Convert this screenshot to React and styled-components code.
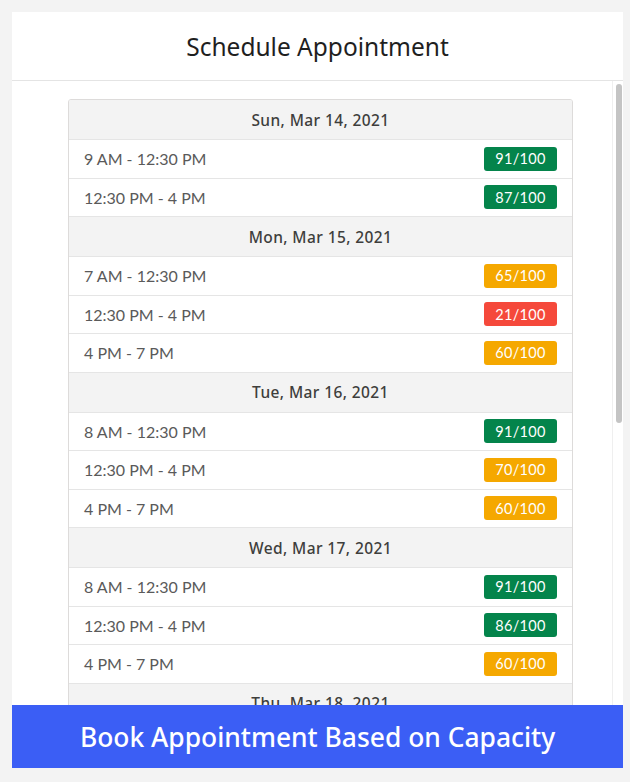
import React from "react";
import styled, { createGlobalStyle } from "styled-components";

const GlobalStyle = createGlobalStyle`
  html, body {
    margin: 0;
    padding: 0;
    background: #f3f3f3;
  }
  * {
    box-sizing: border-box;
  }
`;

const days = [
  {
    date: "Sun, Mar 14, 2021",
    slots: [
      { time: "9 AM - 12:30 PM", booked: 91 },
      { time: "12:30 PM - 4 PM", booked: 87 },
    ],
  },
  {
    date: "Mon, Mar 15, 2021",
    slots: [
      { time: "7 AM - 12:30 PM", booked: 65 },
      { time: "12:30 PM - 4 PM", booked: 21 },
      { time: "4 PM - 7 PM", booked: 60 },
    ],
  },
  {
    date: "Tue, Mar 16, 2021",
    slots: [
      { time: "8 AM - 12:30 PM", booked: 91 },
      { time: "12:30 PM - 4 PM", booked: 70 },
      { time: "4 PM - 7 PM", booked: 60 },
    ],
  },
  {
    date: "Wed, Mar 17, 2021",
    slots: [
      { time: "8 AM - 12:30 PM", booked: 91 },
      { time: "12:30 PM - 4 PM", booked: 86 },
      { time: "4 PM - 7 PM", booked: 60 },
    ],
  },
  {
    date: "Thu, Mar 18, 2021",
    slots: [],
  },
];

const level = (n) => (n >= 80 ? "good" : n >= 50 ? "warn" : "bad");

const colors = {
  good: "#04844b",
  warn: "#f5a800",
  bad: "#f5493b",
};

const Page = styled.div`
  padding: 12px 0 14px 12px;
`;

const Card = styled.div`
  width: 611px;
  height: 756px;
  background: #fff;
  display: flex;
  flex-direction: column;
`;

const Header = styled.div`
  height: 69px;
  flex-shrink: 0;
  display: flex;
  align-items: center;
  justify-content: center;
  border-bottom: 1px solid #e4e4e4;
  font-family: "Noto Sans", sans-serif;
  font-size: 24.5px;
  color: #1f1f1f;
  padding-top: 1px;
`;

const ScrollArea = styled.div`
  position: relative;
  flex: 1;
  min-height: 0;
`;

const Scroller = styled.div`
  height: 100%;
  overflow: hidden;
  padding: 18px 0 0 56px;
`;

const Track = styled.div`
  position: absolute;
  top: 0;
  right: 0;
  bottom: 0;
  width: 11px;
  border-left: 1px solid #efefef;
  background: #fff;
`;

const Thumb = styled.div`
  position: absolute;
  top: 3px;
  left: 3px;
  width: 6px;
  height: 339px;
  border-radius: 3px;
  background: #c4c4c4;
`;

const Table = styled.div`
  width: 505px;
  border: 1px solid #dddbda;
  border-radius: 3px;
  overflow: hidden;
`;

const DateRow = styled.div`
  height: 40px;
  display: flex;
  align-items: center;
  justify-content: center;
  background: #f3f3f3;
  border-bottom: 1px solid #e5e5e5;
  font-family: "Noto Sans", sans-serif;
  font-weight: 500;
  font-size: 15.5px;
  letter-spacing: 0.4px;
  color: #3e3e3c;
`;

const SlotRow = styled.div`
  height: 38.5px;
  display: flex;
  align-items: center;
  justify-content: space-between;
  padding: 0 15px;
  border-bottom: 1px solid #e5e5e5;
  background: #fff;
`;

const Time = styled.span`
  font-family: "Lato", sans-serif;
  font-size: 16px;
  color: #5a5a5a;
`;

const Badge = styled.span`
  width: 73px;
  height: 24px;
  display: flex;
  align-items: center;
  justify-content: center;
  border-radius: 3px;
  background: ${(p) => colors[p.$level]};
  color: #fff;
  font-family: "Lato", sans-serif;
  font-size: 14.5px;
  letter-spacing: 0.3px;
`;

const BookButton = styled.button`
  height: 63px;
  flex-shrink: 0;
  border: none;
  padding: 0;
  background: #3b5ef5;
  color: #fff;
  font-family: "Noto Sans", sans-serif;
  font-weight: 500;
  font-size: 26.4px;
  cursor: pointer;
`;

export default function App() {
  return (
    <Page>
      <GlobalStyle />
      <Card>
        <Header>Schedule Appointment</Header>
        <ScrollArea>
          <Scroller>
            <Table>
              {days.map((day) => (
                <React.Fragment key={day.date}>
                  <DateRow>{day.date}</DateRow>
                  {day.slots.map((slot) => (
                    <SlotRow key={slot.time}>
                      <Time>{slot.time}</Time>
                      <Badge $level={level(slot.booked)}>{slot.booked}/100</Badge>
                    </SlotRow>
                  ))}
                </React.Fragment>
              ))}
            </Table>
          </Scroller>
          <Track>
            <Thumb />
          </Track>
        </ScrollArea>
        <BookButton>Book Appointment Based on Capacity</BookButton>
      </Card>
    </Page>
  );
}
